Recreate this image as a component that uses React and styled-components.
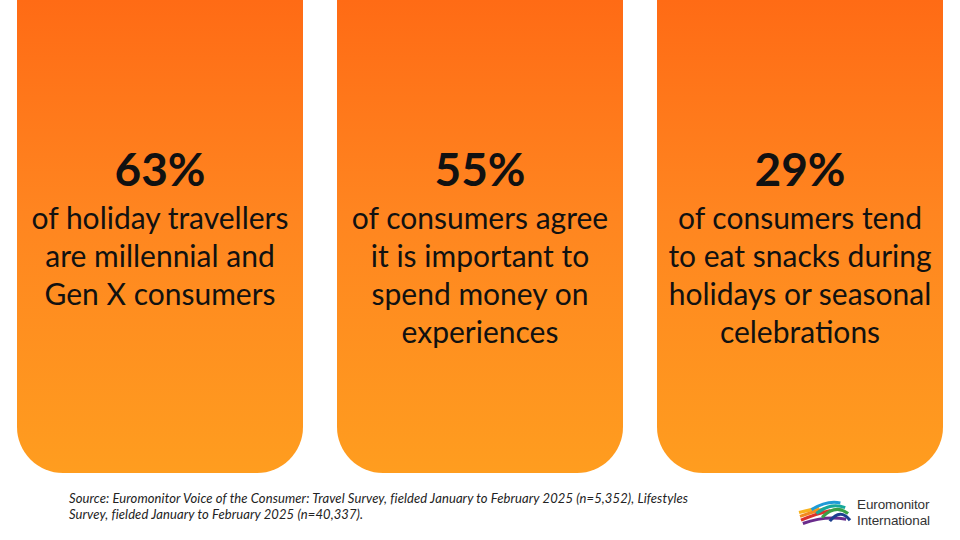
import styled, { createGlobalStyle } from "styled-components";

const GlobalStyle = createGlobalStyle`
  html, body {
    margin: 0;
    padding: 0;
    background: #ffffff;
  }
  body {
    font-family: Lato, "Open Sans", sans-serif;
  }
`;

const stats = [
  { value: "63%", lines: ["of holiday travellers", "are millennial and", "Gen X consumers"] },
  { value: "55%", lines: ["of consumers agree", "it is important to", "spend money on", "experiences"] },
  { value: "29%", lines: ["of consumers tend", "to eat snacks during", "holidays or seasonal", "celebrations"] },
];

export default function App() {
  return (
    <>
      <GlobalStyle />
      <Page>
        <CardRow>
          {stats.map((s) => (
            <Card key={s.value}>
              <Value>{s.value}</Value>
              <Caption>
                {s.lines.map((l) => (
                  <div key={l}>{l}</div>
                ))}
              </Caption>
            </Card>
          ))}
        </CardRow>
        <Footer>
          <Source>
            Source: Euromonitor Voice of the Consumer: Travel Survey, fielded January to February 2025 (n=5,352), Lifestyles
            <br />
            Survey, fielded January to February 2025 (n=40,337).
          </Source>
          <Logo>
            <LogoMark />
            <LogoText>
              <span>Euromonitor</span>
              <span>International</span>
            </LogoText>
          </Logo>
        </Footer>
      </Page>
    </>
  );
}

function LogoMark() {
  // 무지개 아치 모양 로고
  const bands = [
    { d: "M1 13 Q12 10 22 9", c: "#f7b21d" },
    { d: "M2 17 Q16 12 28 9", c: "#f28a1f" },
    { d: "M3 21 Q20 14 34 11", c: "#d9312a" },
    { d: "M5 24.5 Q28 16 50 20", c: "#6a2c8c" },
    { d: "M14 10 Q30 0 44 3", c: "#1f9bd7" },
    { d: "M19 14 Q34 2 49 8", c: "#15a89b" },
    { d: "M25 18 Q39 4 52 14", c: "#3aa047" },
    { d: "M33 22 Q44 8 54 21", c: "#1d3f8f" },
  ];
  return (
    <Mark viewBox="0 0 56 26" width="54" height="25">
      {bands.map((b, i) => (
        <path key={i} d={b.d} stroke={b.c} strokeWidth="3.2" fill="none" />
      ))}
    </Mark>
  );
}

const Page = styled.div`
  width: 960px;
  height: 540px;
  display: flex;
  flex-direction: column;
  overflow: hidden;
  background: #ffffff;
`;

const CardRow = styled.div`
  display: flex;
  gap: 34px;
  padding-left: 17px;
  height: 473px;
`;

const Card = styled.div`
  width: 286px;
  height: 100%;
  box-sizing: border-box;
  border-radius: 0 0 46px 46px;
  background: linear-gradient(180deg, #ff6b15 0%, #ff8520 45%, #ff9d1f 100%);
  padding-top: 141px;
  display: flex;
  flex-direction: column;
  align-items: center;
  text-align: center;
  color: #111111;
`;

const Value = styled.div`
  font-weight: 700;
  font-size: 46px;
  line-height: 56px;
`;

const Caption = styled.div`
  font-size: 30px;
  line-height: 38px;
  margin-top: 1px;
`;

const Footer = styled.div`
  flex: 1;
  display: flex;
  align-items: flex-start;
  justify-content: space-between;
  padding: 17px 30px 0 69px;
`;

const Source = styled.div`
  font-style: italic;
  font-size: 13px;
  letter-spacing: 0.1px;
  line-height: 16px;
  color: #222222;
`;

const Logo = styled.div`
  display: flex;
  align-items: center;
  gap: 5px;
  margin-top: 7px;
`;

const Mark = styled.svg`
  display: block;
`;

const LogoText = styled.div`
  display: flex;
  flex-direction: column;
  font-family: "Liberation Sans", Arial, sans-serif;
  font-size: 13.5px;
  line-height: 15.5px;
  color: #333333;
  letter-spacing: -0.1px;
`;
